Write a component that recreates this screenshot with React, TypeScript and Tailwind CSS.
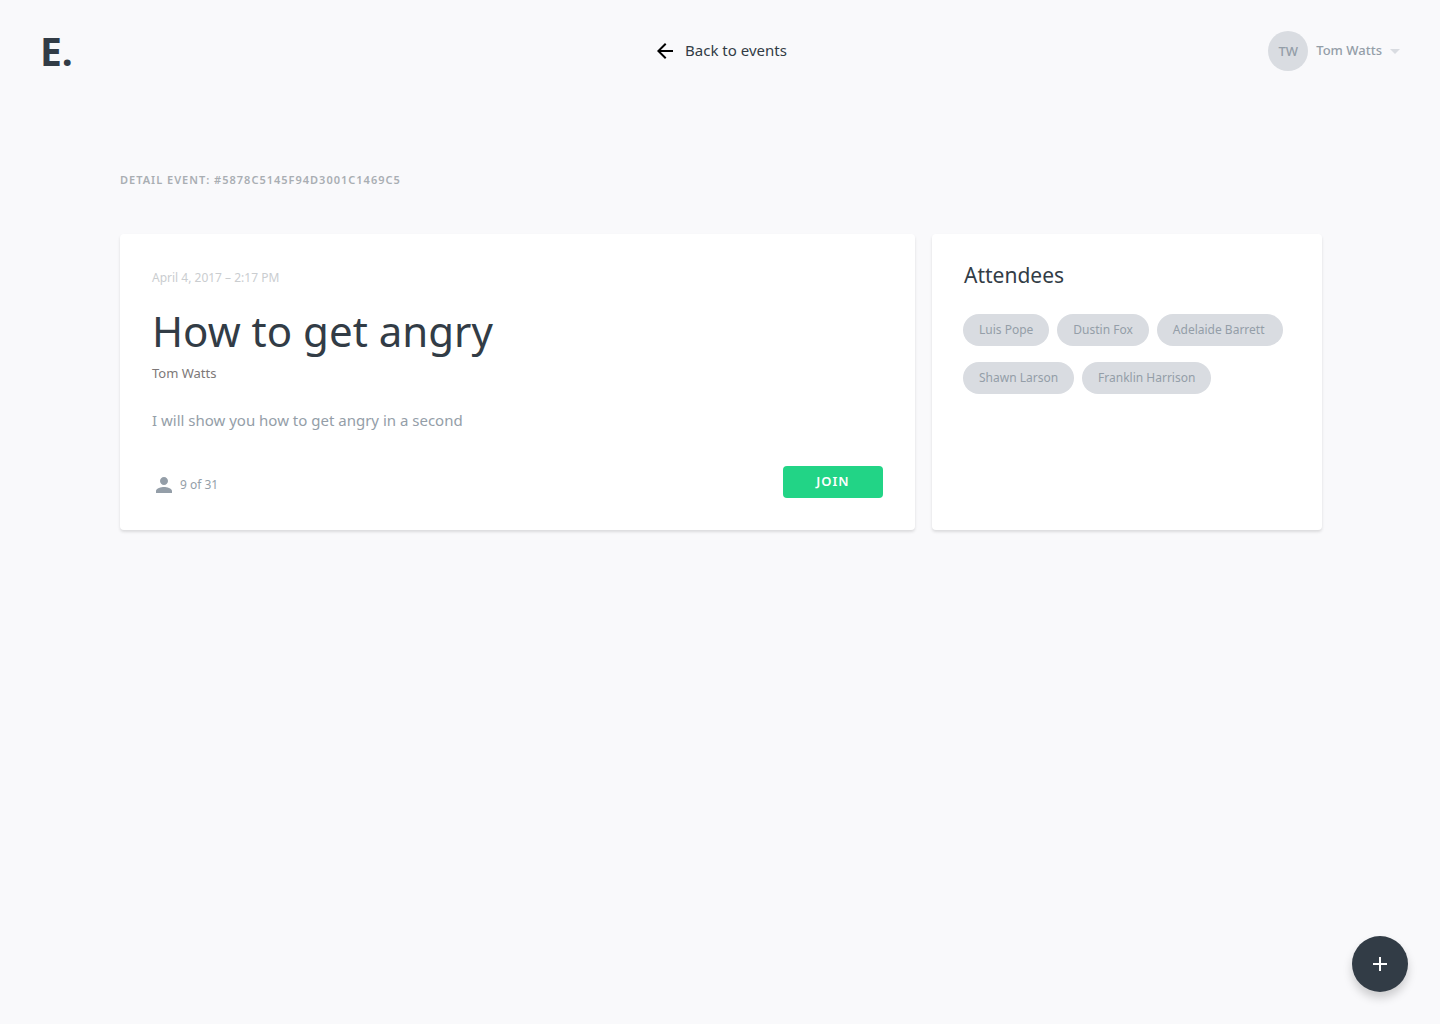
import React from 'react';

const attendees = [
  { name: 'Luis Pope', width: 'min-w-[86px]' },
  { name: 'Dustin Fox', width: 'min-w-[91px]' },
  { name: 'Adelaide Barrett', width: 'min-w-[126px]' },
  { name: 'Shawn Larson', width: 'min-w-[110px]' },
  { name: 'Franklin Harrison', width: 'min-w-[125px]' },
];

function Header() {
  return (
    <header className="grid grid-cols-3 items-center px-10 pt-[30px]">
      <a href="#" className="justify-self-start text-[39px] leading-[42px] font-bold text-[#323c46]">
        E.
      </a>
      <a href="#events" className="flex items-center gap-2 justify-self-center text-[15px] leading-6 text-[#323c46]">
        <svg className="h-6 w-6 text-black" viewBox="0 0 24 24" fill="currentColor" aria-hidden="true">
          <path d="M20 11H7.83l5.59-5.59L12 4l-8 8 8 8 1.41-1.41L7.83 13H20v-2z" />
        </svg>
        <span className="pb-0.5">Back to events</span>
      </a>
      <button type="button" className="flex items-center gap-2 justify-self-end text-[13px] leading-6 font-medium text-[#949ea8]">
        <span className="flex h-10 w-10 items-center justify-center rounded-full bg-[#d9dce1] text-[13px]">TW</span>
        <span className="pb-0.5">Tom Watts</span>
        <svg className="h-[5px] w-[10px]" viewBox="0 0 10 5" fill="#d9dce1" aria-hidden="true">
          <path d="M0 0h10L5 5z" />
        </svg>
      </button>
    </header>
  );
}

function EventCard() {
  return (
    <article className="flex min-h-[296px] flex-col rounded-sm bg-white p-8 shadow-[0_2px_3px_rgba(0,0,0,0.12)]">
      <time className="text-[12px] leading-6 text-[#cacdd0]">April 4, 2017 – 2:17 PM</time>
      <h1 className="mt-[17px] text-[42px] leading-[48px] text-[#323c46]">How to get angry</h1>
      <p className="mt-[6px] text-[13px] leading-6 text-[#7d7878]">Tom Watts</p>
      <p className="mt-[23px] text-[15px] leading-6 text-[#949ea8]">I will show you how to get angry in a second</p>
      <div className="mt-auto flex items-center justify-between">
        <p className="flex items-center gap-1 pt-[6px] text-[12px] leading-6 text-[#949ea8]">
          <svg className="h-6 w-6" viewBox="0 0 24 24" fill="#949ea8" aria-hidden="true">
            <path d="M12 12c2.21 0 4-1.79 4-4s-1.79-4-4-4-4 1.79-4 4 1.79 4 4 4zm0 2c-2.67 0-8 1.34-8 4v2h16v-2c0-2.66-5.33-4-8-4z" />
          </svg>
          9 of 31
        </p>
        <button type="button" className="h-8 w-[100px] rounded bg-[#22d486] text-[13px] font-semibold tracking-[1px] text-white">
          JOIN
        </button>
      </div>
    </article>
  );
}

function Attendees() {
  return (
    <aside className="rounded-sm bg-white px-[31px] pt-7 pb-8 shadow-[0_2px_3px_rgba(0,0,0,0.12)]">
      <h2 className="pl-px text-[21px] leading-[26px] text-[#323c46]">Attendees</h2>
      <ul className="mt-[26px] flex flex-wrap gap-x-2 gap-y-4">
        {attendees.map((person) => (
          <li key={person.name} className={`h-8 rounded-full bg-[#d9dce1] px-4 text-[12px] leading-8 whitespace-nowrap text-[#949ea8] ${person.width}`}>
            {person.name}
          </li>
        ))}
      </ul>
    </aside>
  );
}

export default function App() {
  return (
    <div className="min-h-screen bg-[#f9f9fb] font-['Noto_Sans',sans-serif]">
      <Header />
      <main className="pt-24 pr-[118px] pb-24 pl-[120px]">
        <p className="text-[11px] leading-6 font-semibold tracking-[1px] text-[#a9aeb3]">
          DETAIL EVENT: #5878C5145F94D3001C1469C5
        </p>
        <div className="mt-[42px] grid grid-cols-[795fr_390fr] gap-[17px]">
          <EventCard />
          <Attendees />
        </div>
      </main>
      <button
        type="button"
        aria-label="Create event"
        className="fixed right-8 bottom-8 flex h-14 w-14 items-center justify-center rounded-full bg-[#323c46] shadow-[0_6px_10px_rgba(0,0,0,0.18)]"
      >
        <svg className="h-6 w-6" viewBox="0 0 24 24" fill="#ffffff" aria-hidden="true">
          <path d="M19 13h-6v6h-2v-6H5v-2h6V5h2v6h6v2z" />
        </svg>
      </button>
    </div>
  );
}
